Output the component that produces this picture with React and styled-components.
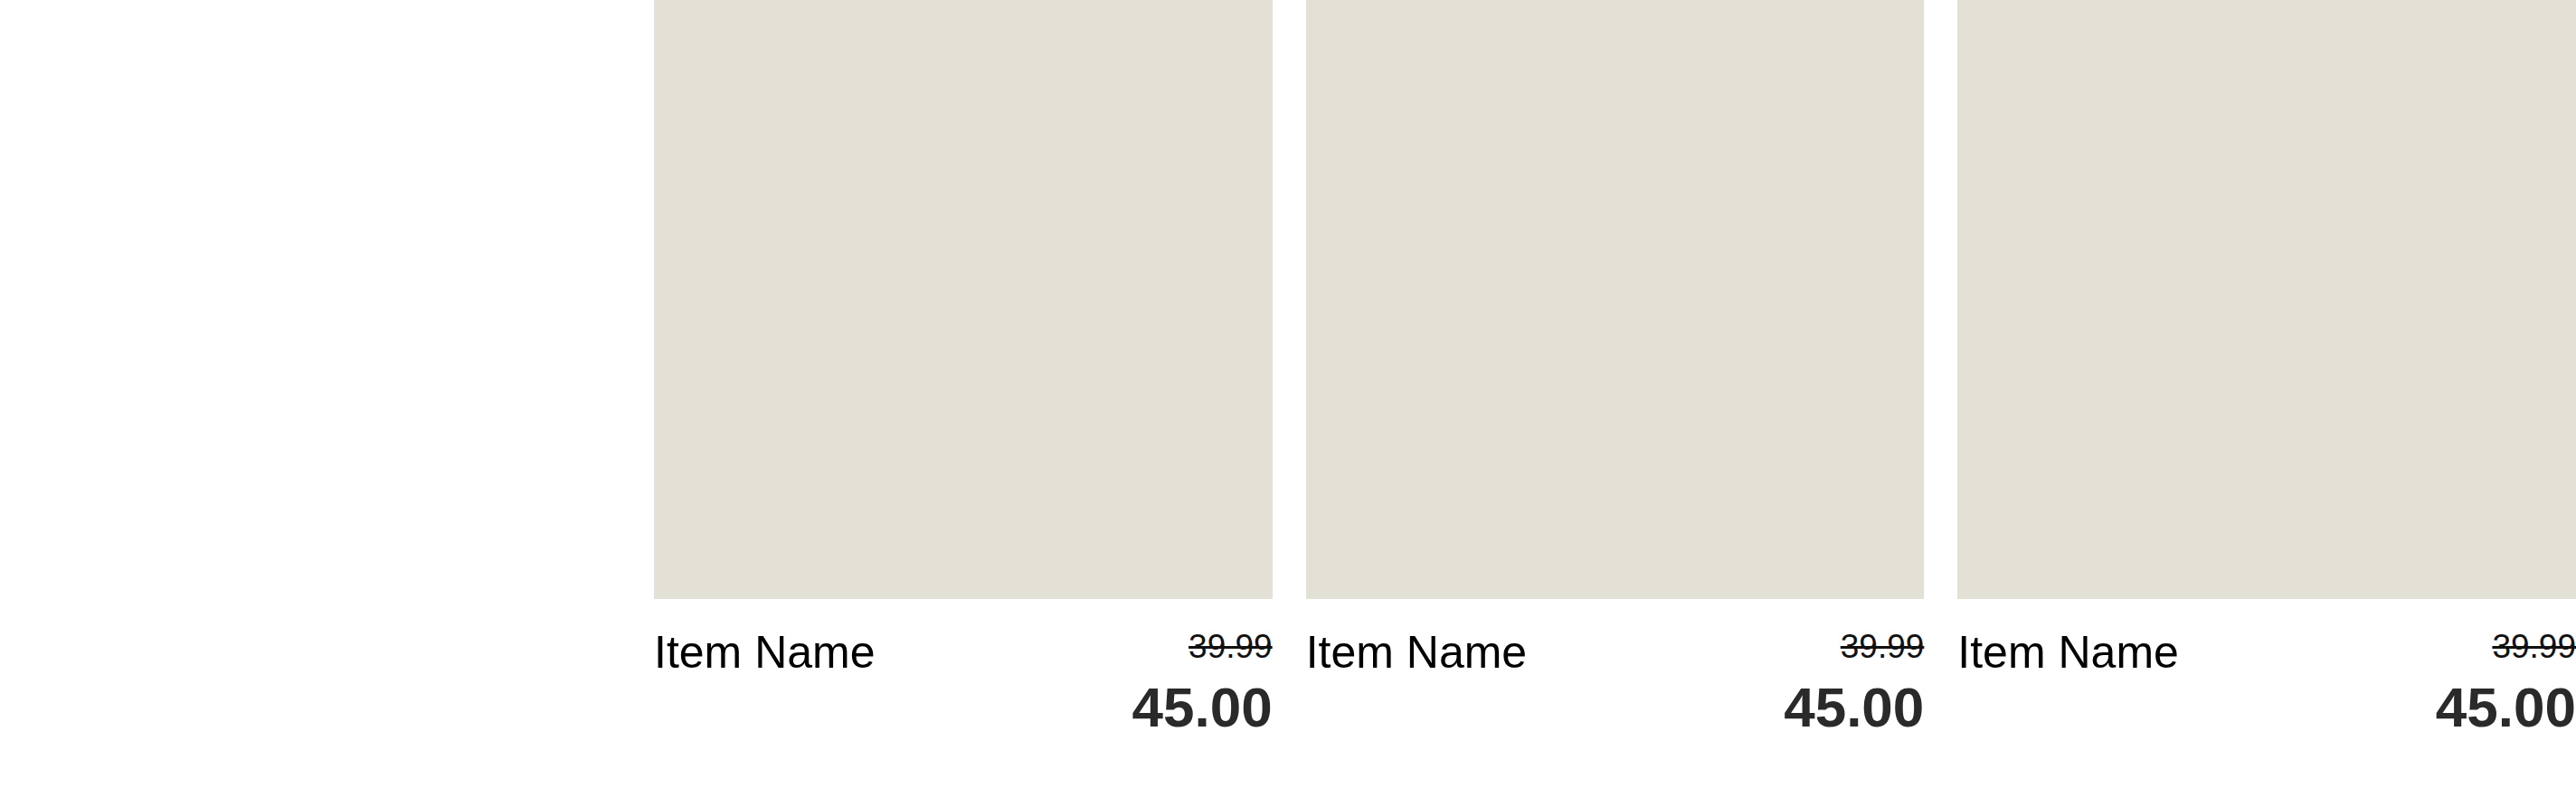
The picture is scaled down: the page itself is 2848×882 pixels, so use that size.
import React from "react";
import styled, { createGlobalStyle } from "styled-components";

const GlobalStyle = createGlobalStyle`
  html, body {
    margin: 0;
    padding: 0;
    background: #fff;
    font-family: "Liberation Sans", Arial, sans-serif;
  }
`;

const Grid = styled.div`
  display: grid;
  grid-template-columns: 686px repeat(3, 1fr);
  column-gap: 37px;
  width: 2848px;
`;

const Sidebar = styled.aside``;

const Card = styled.article`
  display: flex;
  flex-direction: column;
`;

const Picture = styled.div`
  height: 662px;
  background: #e3e0d5;
`;

const Info = styled.div`
  display: flex;
  justify-content: space-between;
  align-items: flex-start;
  margin-top: 34px;
`;

const Name = styled.h3`
  margin: 0;
  font-size: 50px;
  line-height: 50px;
  font-weight: 400;
  color: #000;
`;

const Prices = styled.div`
  display: flex;
  flex-direction: column;
  align-items: flex-end;
`;

const OldPrice = styled.s`
  font-size: 37px;
  line-height: 37px;
  color: #111;
`;

const Price = styled.strong`
  margin-top: 18px;
  font-size: 62px;
  line-height: 62px;
  font-weight: 700;
  color: #2a2a2a;
`;

const items = [
  { name: "Item Name", was: "39.99", price: "45.00" },
  { name: "Item Name", was: "39.99", price: "45.00" },
  { name: "Item Name", was: "39.99", price: "45.00" },
];

export default function App() {
  return (
    <>
      <GlobalStyle />
      <Grid>
        <Sidebar />
        {items.map((item, i) => (
          <Card key={i}>
            <Picture />
            <Info>
              <Name>{item.name}</Name>
              <Prices>
                <OldPrice>{item.was}</OldPrice>
                <Price>{item.price}</Price>
              </Prices>
            </Info>
          </Card>
        ))}
      </Grid>
    </>
  );
}
